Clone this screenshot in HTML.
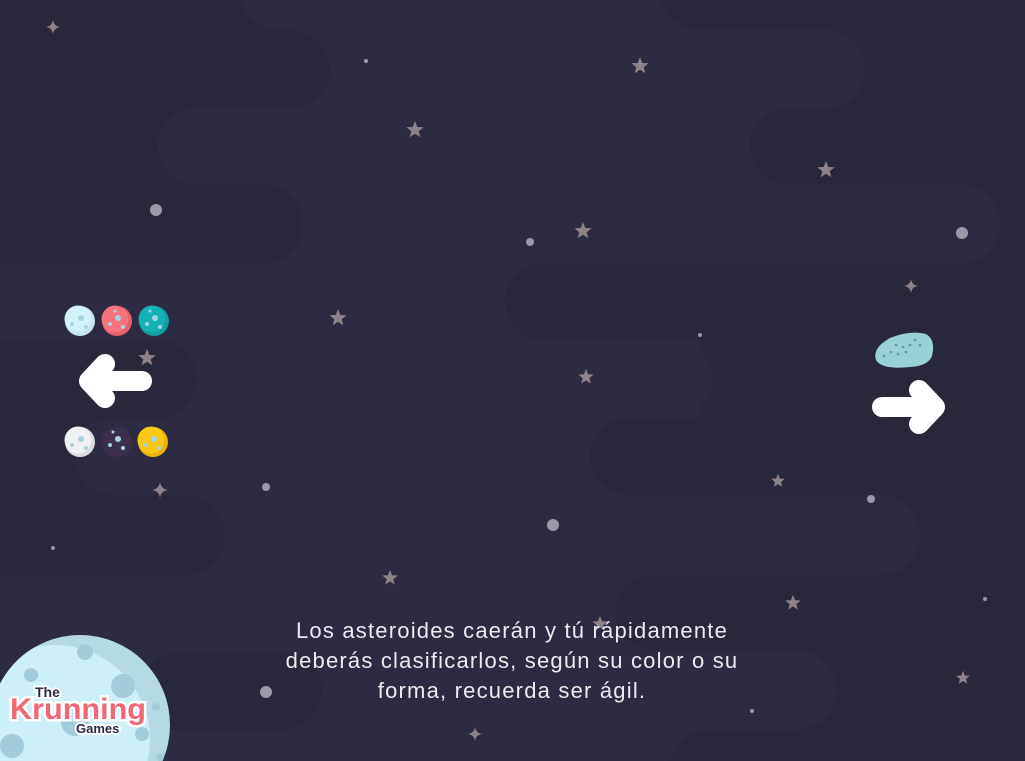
<!DOCTYPE html>
<html><head><meta charset="utf-8"><style>
html,body{margin:0;padding:0;width:1025px;height:761px;overflow:hidden;background:#2d2b41}
svg{display:block}
.t{position:absolute;left:212px;top:616px;width:600px;text-align:center;color:#ecebf0;font-family:"Liberation Sans",sans-serif;font-size:22px;letter-spacing:1.2px;line-height:30px;white-space:nowrap}
</style></head><body>
<svg width="1025" height="761" style="position:absolute;left:0;top:0;overflow:hidden">
<defs>
<symbol id="st" viewBox="-10 -10 20 20"><polygon points="0,-9 2.3,-3 8.6,-2.8 3.7,1.2 5.3,7.3 0,3.8 -5.3,7.3 -3.7,1.2 -8.6,-2.8 -2.3,-3" fill="#8f8288"/></symbol>
<symbol id="sp" viewBox="-10 -10 20 20"><path d="M0,-9 Q1,-1 9,0 Q1,1 0,9 Q-1,1 -9,0 Q-1,-1 0,-9Z" fill="#8f8288"/></symbol>
<clipPath id="mc"><circle cx="80" cy="725" r="90"/></clipPath>
</defs>
<g fill="#29283a">
<rect x="-100" y="30" width="430" height="78" rx="39"/>
<rect x="-100" y="-10" width="380" height="60"/>
<rect x="-100" y="100" width="300" height="90"/>
<rect x="-100" y="185" width="403" height="78" rx="39"/>
<rect x="-100" y="340" width="297" height="78" rx="39"/>
<rect x="-100" y="410" width="220" height="90"/>
<rect x="-100" y="495" width="325" height="80" rx="40"/>
<rect x="140" y="652" width="182" height="78" rx="39"/>
<rect x="700" y="0" width="400" height="761"/>
</g>
<g fill="#2d2b41">
<rect x="240" y="-48" width="460" height="78" rx="39"/>
<rect x="158" y="108" width="700" height="77" rx="38"/>
<rect x="75" y="418" width="300" height="77" rx="38"/>
<rect x="400" y="30" width="465" height="78" rx="39"/>
<rect x="400" y="185" width="600" height="78" rx="39"/>
<rect x="400" y="340" width="312" height="78" rx="39"/>
<rect x="400" y="495" width="520" height="80" rx="40"/>
<rect x="400" y="650" width="436" height="80" rx="40"/>
</g>
<g fill="#29283a">
<rect x="660" y="-48" width="500" height="78" rx="39"/>
<rect x="750" y="108" width="400" height="77" rx="38"/>
<rect x="505" y="263" width="600" height="77" rx="38"/>
<rect x="590" y="418" width="500" height="77" rx="38"/>
<rect x="615" y="575" width="500" height="75" rx="37"/>
<rect x="670" y="730" width="500" height="78" rx="39"/>
</g>
<g fill="#9d98a8">
<circle cx="156" cy="210" r="6"/><circle cx="530" cy="242" r="4"/><circle cx="962" cy="233" r="6"/>
<circle cx="366" cy="61" r="2"/><circle cx="700" cy="335" r="2"/><circle cx="266" cy="487" r="4"/>
<circle cx="553" cy="525" r="6"/><circle cx="871" cy="499" r="4"/><circle cx="53" cy="548" r="2"/>
<circle cx="985" cy="599" r="2"/><circle cx="266" cy="692" r="6"/><circle cx="752" cy="711" r="2"/>
</g>
<use href="#st" x="630" y="56" width="20" height="20"/>
<use href="#st" x="405" y="120" width="20" height="20"/>
<use href="#st" x="816" y="160" width="20" height="20"/>
<use href="#st" x="573" y="221" width="20" height="20"/>
<use href="#st" x="328" y="308" width="20" height="20"/>
<use href="#st" x="137" y="348" width="20" height="20"/>
<use href="#st" x="577" y="368" width="18" height="18"/>
<use href="#st" x="770" y="473" width="16" height="16"/>
<use href="#st" x="381" y="569" width="18" height="18"/>
<use href="#st" x="784" y="594" width="18" height="18"/>
<use href="#st" x="955" y="670" width="16" height="16"/>
<use href="#st" x="591" y="615" width="18" height="18"/>
<use href="#sp" x="45" y="19" width="16" height="16"/>
<use href="#sp" x="903" y="278" width="16" height="16"/>
<use href="#sp" x="467" y="726" width="16" height="16"/>
<use href="#sp" x="151" y="481" width="18" height="18"/>
<g>
<circle cx="80" cy="321" r="15" fill="#c5e4eb"/><circle cx="78" cy="319" r="13.5" fill="#d3f2f8"/>
<circle cx="117" cy="321" r="15" fill="#e6606d"/><circle cx="115" cy="319" r="13.5" fill="#f4737e"/>
<circle cx="154" cy="321" r="15" fill="#0f9fa0"/><circle cx="152" cy="319" r="13.5" fill="#16b2b3"/>
<circle cx="80" cy="442" r="15" fill="#dadddf"/><circle cx="78" cy="440" r="13.5" fill="#eff1f2"/>
<circle cx="117" cy="442" r="15" fill="#3b2f4d"/>
<circle cx="153" cy="442" r="15" fill="#eab20a"/><circle cx="151" cy="440" r="13.5" fill="#fbc716"/>
<g fill="#a7d3e3">
<circle cx="81" cy="318" r="3"/><circle cx="72" cy="324" r="2"/><circle cx="86" cy="327" r="2"/>
<circle cx="118" cy="318" r="3"/><circle cx="110" cy="324" r="2"/><circle cx="123" cy="327" r="2"/><circle cx="115" cy="311" r="1.5"/>
<circle cx="155" cy="318" r="3"/><circle cx="147" cy="324" r="2"/><circle cx="160" cy="327" r="2"/><circle cx="150" cy="311" r="1.5"/>
<circle cx="81" cy="439" r="3"/><circle cx="72" cy="445" r="2"/><circle cx="86" cy="448" r="2"/>
<circle cx="118" cy="439" r="3"/><circle cx="110" cy="445" r="2"/><circle cx="123" cy="448" r="2"/><circle cx="113" cy="432" r="1.5"/>
<circle cx="154" cy="439" r="3"/><circle cx="146" cy="445" r="2"/><circle cx="159" cy="448" r="2"/>
</g>
</g>
<g stroke="#fff" stroke-width="20" stroke-linecap="round" stroke-linejoin="round" fill="none">
<path d="M142 381 H90 M105 364 L89 381 L105 398"/>
<path d="M882 407 H934 M919 390 L935 407 L919 424"/>
</g>
<path d="M876 360 Q872 348 890 338 Q910 330 926 334 Q936 340 932 356 Q928 366 910 367 Q882 370 876 360Z" fill="#98d1d6"/>
<g fill="#5e9aa3"><circle cx="884" cy="356" r="1.3"/><circle cx="891" cy="352" r="1.3"/><circle cx="898" cy="354" r="1.3"/><circle cx="903" cy="347" r="1.3"/><circle cx="910" cy="345" r="1.3"/><circle cx="915" cy="340" r="1.3"/><circle cx="906" cy="352" r="1.3"/><circle cx="896" cy="345" r="1.3"/><circle cx="920" cy="345" r="1.3"/></g>
<g clip-path="url(#mc)">
<rect x="-20" y="630" width="200" height="140" fill="#b6dae3"/>
<circle cx="55" cy="740" r="95" fill="#cdeff7"/>
<g fill="#a3cbd9">
<circle cx="85" cy="652" r="8"/><circle cx="31" cy="675" r="7"/><circle cx="123" cy="686" r="12"/><circle cx="156" cy="707" r="4"/><circle cx="142" cy="734" r="7"/><circle cx="12" cy="746" r="12"/><circle cx="75" cy="722" r="14"/><circle cx="160" cy="757" r="4"/>
</g>
</g>
<text x="35" y="697" font-family="Liberation Sans,sans-serif" font-weight="bold" font-size="14" fill="#2b2745" stroke="#fff" stroke-width="4" paint-order="stroke">The</text>
<text x="10" y="719" font-family="Liberation Sans,sans-serif" font-weight="bold" font-size="30" fill="#f26675" stroke="#fff" stroke-width="5" paint-order="stroke" textLength="136" lengthAdjust="spacingAndGlyphs">Krunning</text>
<text x="76" y="733" font-family="Liberation Sans,sans-serif" font-weight="bold" font-size="13" fill="#2b2745" stroke="#fff" stroke-width="4" paint-order="stroke">Games</text>
</svg>
<div class="t">Los asteroides caerán y tú rápidamente<br>deberás clasificarlos, según su color o su<br>forma, recuerda ser ágil.</div>
</body></html>
